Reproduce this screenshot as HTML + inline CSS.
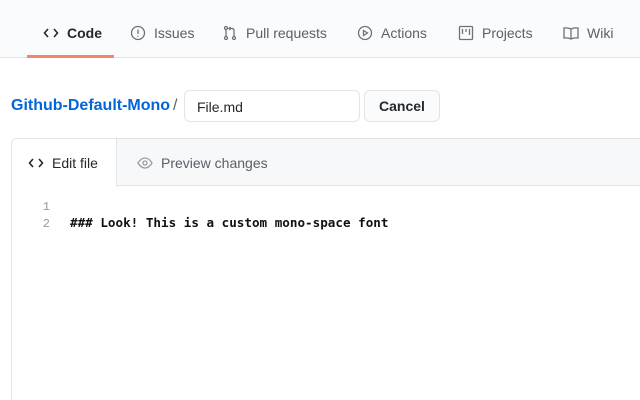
<!DOCTYPE html>
<html style="width:640px;height:400px;overflow:hidden"><head><style>
*{box-sizing:border-box;margin:0;padding:0}
body{width:640px;height:400px;overflow:hidden;background:#fff;font-family:"Liberation Sans",sans-serif;font-size:14px;color:#24292e;position:relative}
.nav{position:absolute;left:0;top:0;width:640px;height:58px;background:#fafbfc;border-bottom:1px solid #e1e4e8}
.it{position:absolute;top:24px;height:18px;display:flex;align-items:center;color:#586069;font-size:14px;white-space:nowrap}
.it svg{margin-right:8px}
.sel{position:absolute;left:27px;top:55px;width:87px;height:3px;background:#f9826c}
.crumb{position:absolute;left:11px;top:97px;font-size:16px;font-weight:bold;color:#0366d6}
.slash{position:absolute;left:173px;top:97px;font-size:16px;color:#586069}
.inp{position:absolute;left:184px;top:90px;width:176px;height:32px;border:1px solid #e1e4e8;border-radius:6px;padding:8px 12px;font-size:14px}
.btn{position:absolute;left:364px;top:90px;width:76px;height:32px;border:1px solid #e1e4e8;border-radius:6px;background:#fafbfc;font-weight:bold;font-size:14px;text-align:center;line-height:30px}
.box{position:absolute;left:11px;top:138px;width:629px;height:262px;border:1px solid #e1e4e8;border-right:none;border-bottom:none;border-radius:6px 0 0 0;overflow:hidden}
.hdr{position:absolute;left:0;top:0;right:0;height:47px;background:#f6f8fa;border-bottom:1px solid #e1e4e8}
.tab{position:absolute;left:0;top:0;width:105px;height:48px;background:#fff;border-right:1px solid #e1e4e8;display:flex;align-items:center;padding-left:16px;font-size:14px}
.tab2{position:absolute;left:125px;top:16px;display:flex;align-items:center;color:#586069;font-size:14px}
.ln{position:absolute;left:24px;font-family:"Liberation Mono",monospace;font-size:12px;color:#999;width:14px;text-align:right}
.code{position:absolute;left:58px;top:76px;font-family:"DejaVu Sans Mono",monospace;font-weight:bold;font-size:12.6px;color:#111;white-space:nowrap}
</style></head><body>
<div class="nav">
<div class="it" style="left:43px;color:#24292e;font-weight:bold"><svg width="16" height="16" viewBox="0 0 16 16" fill="none" stroke="#24292e" stroke-width="1.6"><path d="M5 4L1.5 8 5 12M11 4l3.5 4L11 12"/></svg>Code</div>
<div class="it" style="left:130px"><svg width="16" height="16" viewBox="0 0 16 16" fill="none" stroke="#6a737d" stroke-width="1.3"><circle cx="8" cy="8" r="6.5"/><path d="M8 4.5v4.5M8 10.8v1"/></svg>Issues</div>
<div class="it" style="left:222px"><svg width="16" height="16" viewBox="0 0 16 16" fill="none" stroke="#6a737d" stroke-width="1.3"><circle cx="4" cy="3" r="1.5"/><circle cx="4" cy="13" r="1.5"/><circle cx="12" cy="13" r="1.5"/><path d="M4 4.5v7M12 11.5V5.5q0-2-2-2H7M8.5 2L7 3.5 8.5 5"/></svg>Pull requests</div>
<div class="it" style="left:357px"><svg width="16" height="16" viewBox="0 0 16 16" fill="none" stroke="#6a737d" stroke-width="1.3"><circle cx="8" cy="8" r="6.5"/><path d="M6.5 5.5v5l4-2.5z"/></svg>Actions</div>
<div class="it" style="left:458px"><svg width="16" height="16" viewBox="0 0 16 16" fill="none" stroke="#6a737d" stroke-width="1.3"><rect x="1.5" y="1.5" width="13" height="13" rx="1"/><path d="M4.5 4v5M8 4v3M11.5 4v6"/></svg>Projects</div>
<div class="it" style="left:563px"><svg width="16" height="16" viewBox="0 0 16 16" fill="none" stroke="#6a737d" stroke-width="1.3"><path d="M8 4Q5 2.5 1 3v10q4-.5 7 1 3-1.5 7-1V3q-4-.5-7 1zM8 4v10"/></svg>Wiki</div>
<div class="sel"></div>
</div>
<div class="crumb">Github-Default-Mono</div>
<div class="slash">/</div>
<div class="inp">File.md</div>
<div class="btn">Cancel</div>
<div class="box">
<div class="hdr"></div>
<div class="tab"><svg width="16" height="16" viewBox="0 0 16 16" fill="none" stroke="#24292e" stroke-width="1.6" style="margin-right:8px"><path d="M5 4L1.5 8 5 12M11 4l3.5 4L11 12"/></svg>Edit file</div>
<div class="tab2"><svg width="16" height="16" viewBox="0 0 16 16" fill="none" stroke="#959da5" stroke-width="1.3" style="margin-right:8px"><path d="M1 8q3-5 7-5t7 5q-3 5-7 5T1 8z"/><circle cx="8" cy="8" r="2"/></svg>Preview changes</div>
<div class="ln" style="top:61px">1</div>
<div class="ln" style="top:78px">2</div>
<div class="code">### Look! This is a custom mono-space font</div>
</div>
</body></html>
